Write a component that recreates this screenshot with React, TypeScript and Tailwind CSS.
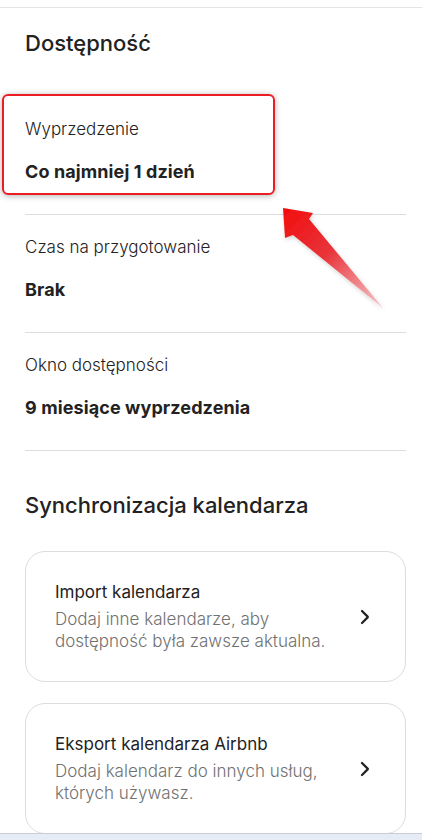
import React from 'react';

const font = { fontFamily: 'Inter, "Noto Sans", sans-serif' };

const Chevron = () => (
    <svg width="16" height="16" viewBox="0 0 32 32" fill="none" stroke="#222222" strokeWidth="4.5" strokeLinecap="round" strokeLinejoin="round">
        <path d="M12 4l11.3 11.3a1 1 0 0 1 0 1.4L12 28" />
    </svg>
);

const Setting = ({ label, value }: { label: string; value: string }) => (
    <div className="pt-[22px] pb-[32px] border-b border-[#dddddd]">
        <p className="text-[17px] leading-5 font-light text-[#222222]">{label}</p>
        <p className="mt-[23px] text-[18px] leading-5 font-bold tracking-[0.1px] text-[#222222]">{value}</p>
    </div>
);

const SyncCard = ({ title, desc }: { title: string; desc: string }) => (
    <div className="h-[131px] rounded-[20px] border border-[#dddddd] pl-[29px] pr-[33px] flex items-center justify-between">
        <div className="w-[300px]">
            <p className="text-[17px] leading-[22px] text-[#222222]">{title}</p>
            <p className="mt-[5px] text-[17px] leading-[22px] font-light text-[#717171]">{desc}</p>
        </div>
        <Chevron />
    </div>
);

const App = () => {
    return (
        <div className="relative w-[422px] h-[840px] overflow-hidden bg-white flex flex-col" style={font}>
            <div className="h-[8px] border-b border-[#e4e4e4] shrink-0" />
            <main className="flex-1 overflow-hidden pl-[25px] pr-[16px]">
                <h2 className="mt-[21px] text-[22px] leading-7 font-medium text-[#222222]">Dostępność</h2>
                <div className="mt-[40px]">
                    <Setting label="Wyprzedzenie" value="Co najmniej 1 dzień" />
                    <Setting label="Czas na przygotowanie" value="Brak" />
                    <Setting label="Okno dostępności" value="9 miesiące wyprzedzenia" />
                </div>
                <h2 className="mt-[40px] text-[22px] leading-7 font-medium text-[#222222]">Synchronizacja kalendarza</h2>
                <div className="mt-[32px] flex flex-col gap-[21px]">
                    <SyncCard title="Import kalendarza" desc="Dodaj inne kalendarze, aby dostępność była zawsze aktualna." />
                    <SyncCard title="Eksport kalendarza Airbnb" desc="Dodaj kalendarz do innych usług, których używasz." />
                </div>
            </main>
            <div className="h-[7px] shrink-0 border-t border-[#c9ced6] bg-[#e6ecf6]" />

            {/* annotation: highlight box */}
            <div className="absolute left-[2px] top-[94px] w-[273px] h-[101px] rounded-[6px] border-2 border-[#ec1c24] shadow-[0_1px_6px_rgba(0,0,0,0.3)]" />
            {/* annotation: arrow */}
            <svg className="absolute left-[270px] top-[195px]" width="125" height="120" viewBox="0 0 125 120">
                <defs>
                    <linearGradient id="arr" x1="13" y1="13" x2="113" y2="113" gradientUnits="userSpaceOnUse">
                        <stop offset="0" stopColor="#f20d0d" />
                        <stop offset="0.45" stopColor="#e8343a" />
                        <stop offset="1" stopColor="#f6c9cc" />
                    </linearGradient>
                    <filter id="sh" x="-20%" y="-20%" width="140%" height="140%">
                        <feDropShadow dx="1" dy="2" stdDeviation="2" floodColor="#000" floodOpacity="0.18" />
                    </filter>
                </defs>
                <path d="M13 13 L43 18 L39 24 L113 113 L23 40 L15 43 Z" fill="url(#arr)" filter="url(#sh)" />
            </svg>
        </div>
    );
};

export default App;
